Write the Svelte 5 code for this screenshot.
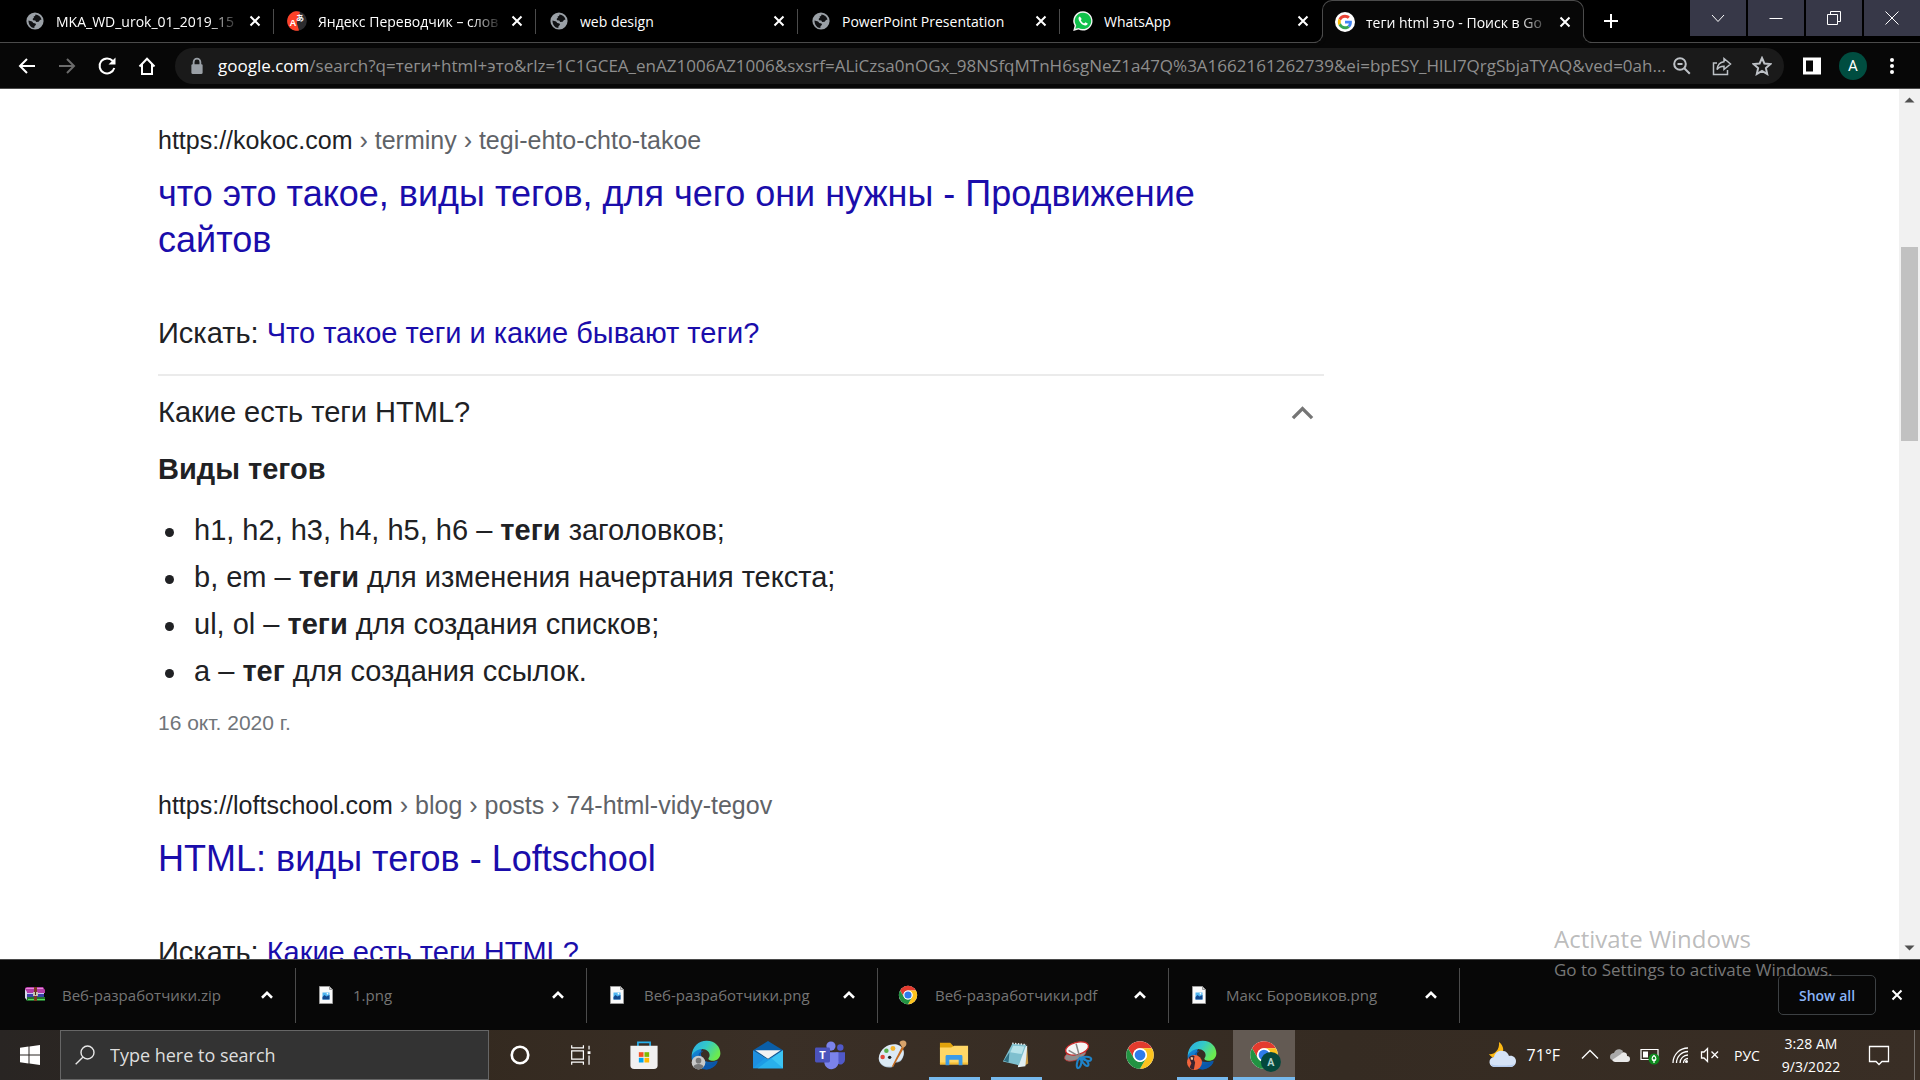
<script>
  const tabs = [
    { title: 'MKA_WD_urok_01_2019_15', icon: 'globe', long: true },
    { title: 'Яндекс Переводчик – слов', icon: 'yandex', long: true },
    { title: 'web design', icon: 'globe' },
    { title: 'PowerPoint Presentation', icon: 'globe' },
    { title: 'WhatsApp', icon: 'whatsapp' },
    { title: 'теги html это - Поиск в Go', icon: 'google', active: true, long: true }
  ];

  const urlRest =
    '/search?q=теги+html+это&rlz=1C1GCEA_enAZ1006AZ1006&sxsrf=ALiCzsa0nOGx_98NSfqMTnH6sgNeZ1a47Q%3A1662161262739&ei=bpESY_HlLI7QrgSbjaTYAQ&ved=0ah...';

  const downloads = [
    { name: 'Веб-разработчики.zip', icon: 'rar' },
    { name: '1.png', icon: 'image' },
    { name: 'Веб-разработчики.png', icon: 'image' },
    { name: 'Веб-разработчики.pdf', icon: 'chrome' },
    { name: 'Макс Боровиков.png', icon: 'image' }
  ];

  const tagKinds = [
    ['h1, h2, h3, h4, h5, h6 – ', 'теги', ' заголовков;'],
    ['b, em – ', 'теги', ' для изменения начертания текста;'],
    ['ul, ol – ', 'теги', ' для создания списков;'],
    ['a – ', 'тег', ' для создания ссылок.']
  ];

  const apps = [
    { name: 'Cortana', icon: 'cortana' },
    { name: 'Task View', icon: 'taskview' },
    { name: 'Microsoft Store', icon: 'store' },
    { name: 'Microsoft Edge', icon: 'edgeUser' },
    { name: 'Mail', icon: 'mail' },
    { name: 'Teams', icon: 'teams' },
    { name: 'Paint', icon: 'paint' },
    { name: 'File Explorer', icon: 'explorer', open: true },
    { name: 'Notepad', icon: 'notepad', open: true },
    { name: 'Snipping Tool', icon: 'snip' },
    { name: 'Google Chrome', icon: 'chrome' },
    { name: 'Microsoft Edge profile', icon: 'edgeProfile', open: true },
    { name: 'Google Chrome profile', icon: 'chromeProfile', open: true, active: true }
  ];

  let expanded = $state(true);
</script>

{#snippet chromeShape()}
  <circle cx="24" cy="24" r="22" fill="#fff" />
  <path fill="#e33b2e" d="M4.95 13A22 22 0 0 1 43.05 13H24A11 11 0 0 0 14.47 29.5Z" />
  <path fill="#fcc31e" d="M43.05 13A22 22 0 0 1 24 46L33.53 29.5A11 11 0 0 0 24 13Z" />
  <path fill="#229342" d="M24 46A22 22 0 0 1 4.95 13L14.47 29.5A11 11 0 0 0 33.53 29.5Z" />
  <circle cx="24" cy="24" r="11" fill="#fff" />
  <circle cx="24" cy="24" r="8.6" fill="#2f7bea" />
{/snippet}

{#snippet edgeShape(id)}
  <defs>
    <linearGradient id="{id}a" x1="0" y1="0" x2="1" y2="0.5">
      <stop offset="0" stop-color="#2ba7ea" />
      <stop offset="0.5" stop-color="#33c9c9" />
      <stop offset="1" stop-color="#6bea4f" />
    </linearGradient>
    <linearGradient id="{id}b" x1="0" y1="0" x2="0.7" y2="1">
      <stop offset="0" stop-color="#1590e0" />
      <stop offset="1" stop-color="#0b4f9e" />
    </linearGradient>
  </defs>
  <path fill="url(#{id}b)" d="M1 26C2 15 12 11 20 12C15 16 15 22 17 27C21 36 32 37 41 33C43 33 43 34 42 36C38 43 31 47 24 47C10 47 0 37 1 26Z" />
  <path fill="#0a58ad" d="M20 17C14 20 13 30 18 36C24 43 35 42 42 36C38 44 30 47 25 47C14 45 9 36 11 27C12 21 16 17 20 17Z" />
  <path fill="url(#{id}a)" d="M1 25C2 10 12 1 25 1C39 1 47 11 47 21C47 29 41 33 35 33C30 33 27 31 28 29C31 26 30 21 27 18C20 11 7 14 1 25Z" />
{/snippet}

{#snippet icon(name)}
  {#if name === 'globe'}
    <svg class="fav" viewBox="0 0 20 20" aria-hidden="true">
      <circle cx="10" cy="10" r="8.6" fill="#9aa0a6" />
      <path fill="#101113" d="M10.500 3.600c2.800.2 5.300 2.100 6 4.800l-1.500.5-1.400 1.900-2.400.2-.9-1.500-2.200-.3-.5-1.300 1.400-1.300-.4-1.100 1.500-.4zM3.500 9.500l3.600 1 1.200 1.500 2.200.4.500 1.300-1.500 1.600-.2 1.800C6 16.800 3.400 13.800 3.500 9.500z" />
    </svg>
  {:else if name === 'yandex'}
    <svg class="fav" viewBox="0 0 20 20" aria-hidden="true">
      <circle cx="10" cy="10" r="9.8" fill="#2b2b2e" />
      <path fill="#fc4128" d="M13 .7A9.800 9.800 0 1 0 12 19.600L9.800 12Z" />
      <text x="2.500" y="14.500" font-size="9.500" font-weight="700" fill="#fff" font-family="Liberation Sans, sans-serif">A</text>
      <text x="9" y="10" font-size="8" font-weight="700" fill="#fff" font-family="Noto Sans CJK JP, sans-serif">あ</text>
    </svg>
  {:else if name === 'whatsapp'}
    <svg class="fav" viewBox="0 0 20 20" aria-hidden="true">
      <path fill="#f4f4f4" d="M10 .2A9.700 9.700 0 0 0 1.600 14.800L.2 19.900l5.300-1.300A9.700 9.700 0 1 0 10 .2z" />
      <path fill="#10c14b" d="M10 1.700A8.200 8.200 0 0 0 3.200 14.500l-.9 3.300 3.400-.9A8.200 8.200 0 1 0 10 1.700z" />
      <path fill="#fff" d="M6.900 5.400c-.8.1-1.500 1.200-1.300 2.500.5 3 3.600 6.200 6.700 6.600 1.400.1 2.400-.8 2.400-1.900l-2.300-1.300-1.300 1.200c-1.400-.5-2.700-1.800-3.300-3.200l.9-1.200z" />
    </svg>
  {:else if name === 'google'}
    <svg class="fav" viewBox="0 0 20 20" aria-hidden="true">
      <circle cx="10" cy="10" r="10" fill="#fff" />
      <g transform="translate(2.800 2.800) scale(.3)">
        <path fill="#ea4335" d="M24 9.500c3.540 0 6.710 1.220 9.210 3.600l6.850-6.850C35.900 2.380 30.470 0 24 0 14.620 0 6.510 5.380 2.560 13.220l7.980 6.190C12.430 13.720 17.740 9.500 24 9.500z" />
        <path fill="#4285f4" d="M46.980 24.550c0-1.570-.15-3.090-.38-4.550H24v9.020h12.940c-.58 2.960-2.260 5.480-4.780 7.180l7.730 6c4.510-4.180 7.090-10.360 7.090-17.650z" />
        <path fill="#fbbc05" d="M10.530 28.590c-.48-1.450-.76-2.990-.76-4.590s.27-3.140.76-4.590l-7.980-6.190C.92 16.460 0 20.120 0 24c0 3.880.92 7.540 2.560 10.780l7.970-6.190z" />
        <path fill="#34a853" d="M24 48c6.480 0 11.930-2.130 15.890-5.810l-7.730-6c-2.150 1.450-4.920 2.300-8.160 2.300-6.260 0-11.570-4.220-13.470-9.910l-7.980 6.190C6.510 42.620 14.620 48 24 48z" />
      </g>
    </svg>
  {:else if name === 'rar'}
    <svg class="file" viewBox="0 0 20 20" aria-hidden="true">
      <path fill="#b23ba6" d="M0 3l2-1h16l2 3v3H2L0 6z" />
      <path fill="#e58ad9" d="M1 3h17v1H1z" />
      <path fill="#3b3fa8" d="M1 8h18v4H2l-1-1z" />
      <path fill="#c9c9f2" d="M2 8h17v1H2z" />
      <path fill="#24702f" d="M1 12h19v4H2l-1-1z" />
      <path fill="#55e055" d="M3 14h17v1H3z" />
      <path fill="#d8d8e8" d="M0 4l2 3v8l-2-2z" />
      <path fill="#7a3a20" d="M9 2h3v14H9z" />
      <path fill="#c9c2b4" d="M8 7h5v4H8z" />
      <path fill="#4a2a1c" d="M10 7h1v3h-1z" />
    </svg>
  {:else if name === 'image'}
    <svg class="file" viewBox="0 0 20 20" aria-hidden="true">
      <path fill="#fafafa" stroke="#9a9a9a" stroke-width="1" d="M3.500 1.500h10l3 3v14h-13z" />
      <path fill="#d5d5d5" stroke="#8a8a8a" stroke-width=".8" d="M13.500 1.500v3h3z" />
      <path fill="#4fb4f0" d="M6.500 7.500h7v7h-7z" />
      <path fill="#12488f" d="M6.500 12l2-2 2 1.500 3-1.500v4.500h-7z" />
      <circle cx="11.500" cy="8.700" r=".9" fill="#fff" />
    </svg>
  {:else if name === 'chrome'}
    <svg class="app" viewBox="0 0 48 48" aria-hidden="true">{@render chromeShape()}</svg>
  {:else if name === 'chromeProfile'}
    <svg class="app spill" viewBox="0 0 48 48" aria-hidden="true">
      {@render chromeShape()}
      <circle cx="35" cy="35" r="16" fill="#04483d" />
      <text x="35" y="41" text-anchor="middle" font-size="17" font-weight="700" fill="#b5d3cb" font-family="Roboto, sans-serif">A</text>
    </svg>
  {:else if name === 'edgeUser'}
    <svg class="app" viewBox="0 0 48 48" aria-hidden="true">
      {@render edgeShape('eu')}
      <circle cx="12" cy="36" r="11" fill="#c9c9c9" />
      <circle cx="12" cy="33" r="4.500" fill="#777" />
      <path fill="#777" d="M4 43c1-6 15-6 16 0-4 5-12 5-16 0z" />
    </svg>
  {:else if name === 'edgeProfile'}
    <svg class="app" viewBox="0 0 48 48" aria-hidden="true">
      {@render edgeShape('ep')}
      <circle cx="12" cy="36" r="12" fill="#f2643c" />
      <path fill="#3a2430" d="M3 28c3-3 7-4 9-2l-1 5 2 5-2 11c-3 0-5-1-7-3l3-7z" />
      <path fill="#f7c59a" d="M6 27l4 1-1 4-3-1z" />
    </svg>
  {:else if name === 'cortana'}
    <svg class="app" viewBox="0 0 32 32" aria-hidden="true">
      <circle cx="16" cy="16" r="8.800" fill="none" stroke="#fff" stroke-width="2.800" />
    </svg>
  {:else if name === 'taskview'}
    <svg class="app" viewBox="0 0 32 32" aria-hidden="true" fill="none" stroke="#fff" stroke-width="1.300">
      <path d="M5 11.500h12.500v9H5zM5 5.500v3h12.500v-3M5 26.500v-3h12.500v3M23.500 6v4M23.500 16.500v10" />
      <path d="M22 12h3v3h-3z" fill="#fff" stroke="none" />
    </svg>
  {:else if name === 'store'}
    <svg class="app" viewBox="0 0 32 32" aria-hidden="true">
      <path fill="none" stroke="#27b1ee" stroke-width="1.800" d="M9.500 7V2.500h13V7" />
      <path fill="#f1f1f1" d="M1.500 6h29v21a4 4 0 0 1-4 4h-21a4 4 0 0 1-4-4z" />
      <path fill="#f25022" d="M10.500 13h5v5h-5z" />
      <path fill="#7fba00" d="M16.500 13h5v5h-5z" />
      <path fill="#00a4ef" d="M10.500 19h5v5h-5z" />
      <path fill="#ffb900" d="M16.500 19h5v5h-5z" />
    </svg>
  {:else if name === 'mail'}
    <svg class="app" viewBox="0 0 32 32" aria-hidden="true">
      <path fill="#0a5ea8" d="M0 11L16 1l16 10-16 9z" />
      <path fill="#1d8fe0" d="M0 11l16 9.500L32 11v19H0z" />
      <path fill="#3cc4f3" d="M32 11v19H5z" />
      <path fill="#1da4e8" d="M0 30l13-11 3 1.500 3-1.500 13 11z" opacity=".6" />
      <path fill="#f3f3f3" d="M2.500 11h27L16 20z" />
    </svg>
  {:else if name === 'teams'}
    <svg class="app" viewBox="0 0 32 32" aria-hidden="true">
      <circle cx="17" cy="6.500" r="4.900" fill="#7b83eb" />
      <circle cx="27" cy="8" r="3.400" fill="#5059c9" />
      <path fill="#5059c9" d="M22 13h10v8a5 5 0 0 1-8 4z" />
      <path fill="#7b83eb" d="M10 13h15v9a7.500 7.500 0 0 1-15 3z" />
      <rect x="0" y="8" width="16" height="16" rx="1.500" fill="#4b53bc" />
      <text x="8" y="20.500" text-anchor="middle" font-size="12" font-weight="700" fill="#fff" font-family="Open Sans, sans-serif">T</text>
    </svg>
  {:else if name === 'paint'}
    <svg class="app" viewBox="0 0 32 32" aria-hidden="true">
      <path fill="#a9bfd1" d="M2 19C4 9 14 4 22 6c7 2 8 9 5 14-2 4-5 4-7 4-3 1-1 4-4 5C8 31 1 25 2 19z" />
      <path fill="#dceaf5" d="M2 18C4 8 14 3 22 5c7 2 8 9 5 14-2 4-5 4-7 4-3 1-1 4-4 5C8 30 1 24 2 18z" />
      <circle cx="6" cy="18" r="2.400" fill="#e0483c" />
      <circle cx="10" cy="11.500" r="2.400" fill="#59b04a" />
      <circle cx="17" cy="9" r="2.600" fill="#f4b42c" />
      <circle cx="13.500" cy="18.500" r="1.800" fill="#222" />
      <path fill="#c46a1e" d="M27 6l2 2-12 21-1-1z" />
      <path fill="#d7a36b" d="M24 3c1-3 5-3 7-1 1 2 0 6-4 6z" />
    </svg>
  {:else if name === 'explorer'}
    <svg class="app" viewBox="0 0 32 32" aria-hidden="true">
      <path fill="#e0a30c" d="M1 3h11l3 3v4H1z" />
      <path fill="#ffd766" d="M1 8h12l3-2h15v20H1z" />
      <path fill="#f5bd35" d="M1 24h30v2H1z" />
      <path fill="#3a9be8" d="M7 27V17.500a1.500 1.500 0 0 1 1.500-1.500h15a1.500 1.500 0 0 1 1.500 1.500V27h-4v-6h-10v6z" />
    </svg>
  {:else if name === 'notepad'}
    <svg class="app" viewBox="0 0 32 32" aria-hidden="true">
      <path fill="#c99a45" d="M25 6l3 2 1 17-5 3z" />
      <path fill="#dfeef2" d="M21 8l7-2-2 22-8 1z" />
      <path fill="#7fc0cf" d="M12 4l15 1-8 22L2 23z" />
      <path fill="#2f6f82" d="M3 22l6-9-1 11z" />
      <path fill="#b7e3ea" d="M13 6l12 1-3 8-12-2z" />
      <path fill="none" stroke="#e9f3f5" stroke-width="1.600" stroke-dasharray="1.500 1.500" d="M12 3.500l15 1.500" />
    </svg>
  {:else if name === 'snip'}
    <svg class="app" viewBox="0 0 32 32" aria-hidden="true">
      <ellipse cx="13" cy="16" rx="12" ry="5.500" transform="rotate(-20 13 16)" fill="#8d8d8d" stroke="#c33" stroke-width=".7" />
      <ellipse cx="15" cy="9" rx="12.500" ry="6.500" transform="rotate(-15 15 9)" fill="#f5f5f5" stroke="#cf2a2a" stroke-width="1.300" />
      <path fill="none" stroke="#888" stroke-width="1.600" d="M6 11l14 8M14 4l4 15" />
      <path fill="none" stroke="#1f83c9" stroke-width="2.200" d="M18 19c-4 3-4 11-2 11s5-5 3-10c3 7 7 9 8 7s-3-8-8-8c6-2 12-1 11 2s-6 1-11-2z" />
    </svg>
  {/if}
{/snippet}

{#snippet cross()}
  <svg class="cross" viewBox="0 0 16 16" aria-hidden="true"><path d="M3.500 3.500l9 9M12.500 3.500l-9 9" /></svg>
{/snippet}

<div class="screen">
  <header class="tabstrip">
    <div class="tabs" role="tablist">
      {#each tabs as tab}
        <div class="tab" class:active={tab.active} role="tab" aria-selected={!!tab.active} tabindex="0">
          {@render icon(tab.icon)}
          <span class="tab-title" class:faded={tab.long}>{tab.title}</span>
          <button class="tab-close" aria-label="Close tab">{@render cross()}</button>
        </div>
      {/each}
    </div>
    <button class="new-tab" aria-label="New tab">
      <svg viewBox="0 0 16 16" aria-hidden="true"><path d="M8 1v14M1 8h14" /></svg>
    </button>
    <div class="window-controls">
      <button aria-label="Search tabs"><svg viewBox="0 0 16 16" aria-hidden="true"><path d="M2 5l6 6.500L14 5" /></svg></button>
      <button aria-label="Minimize"><svg viewBox="0 0 16 16" aria-hidden="true"><path d="M1.500 8.500h13" /></svg></button>
      <button aria-label="Restore"><svg viewBox="0 0 16 16" aria-hidden="true"><path d="M1.500 4.500h10v10h-10zM4.500 4.500v-3h10v10h-3" /></svg></button>
      <button aria-label="Close window"><svg viewBox="0 0 16 16" aria-hidden="true"><path d="M1.500 1.500l13 13M14.500 1.500l-13 13" /></svg></button>
    </div>
  </header>

  <nav class="toolbar" aria-label="Browser toolbar">
    <button class="tool" aria-label="Back">
      <svg viewBox="0 0 20 20" aria-hidden="true" class="stroke"><path d="M18 10H3M10 3l-7 7 7 7" /></svg>
    </button>
    <button class="tool dim" aria-label="Forward">
      <svg viewBox="0 0 20 20" aria-hidden="true" class="stroke"><path d="M2 10h15M10 3l7 7-7 7" /></svg>
    </button>
    <button class="tool" aria-label="Reload">
      <svg viewBox="0 0 20 20" aria-hidden="true" class="stroke"><path d="M15.800 5A7.500 7.500 0 1 0 17.300 12" /><path d="M18.500 1.500v7H11.500z" fill="currentColor" stroke="none" /></svg>
    </button>
    <button class="tool" aria-label="Home">
      <svg viewBox="0 0 20 20" aria-hidden="true" class="stroke"><path d="M2.500 10.500L10 2.800l7.500 7.700M5 8.500V18h10V8.500" /></svg>
    </button>
    <div class="omnibox">
      <svg class="lock" viewBox="0 0 16 16" aria-hidden="true"><rect x="3" y="6.500" width="10" height="8.500" rx="1" fill="#9aa0a6" /><path d="M5 7V4.500a3 3 0 0 1 6 0V7" fill="none" stroke="#9aa0a6" stroke-width="1.600" /></svg>
      <label class="host" for="address">google.com</label>
      <input id="address" class="address" type="text" value={urlRest} spellcheck="false" />
      <div class="page-tools">
        <button aria-label="Zoom">
          <svg viewBox="0 0 20 20" aria-hidden="true" class="stroke"><circle cx="8" cy="8" r="5.800" /><path d="M12.300 12.300l5.500 5.500M5.500 8h5" /></svg>
        </button>
        <button aria-label="Share">
          <svg viewBox="0 0 20 20" aria-hidden="true" class="stroke thin"><path d="M5 7H1.500v11.500h14V14" /><path d="M12 2.500l6.500 5.500L12 13.500v-3.300c-3.500 0-5.500 1-7 3.300.5-4.300 2.800-7.300 7-7.800z" /></svg>
        </button>
        <button aria-label="Bookmark this page">
          <svg viewBox="0 0 20 20" aria-hidden="true" class="stroke"><path d="M10 2l2.400 5.500 6 .6-4.500 4 1.300 5.900L10 14.900 4.800 18l1.300-5.900-4.500-4 6-.6z" /></svg>
        </button>
      </div>
    </div>
    <button class="tool" aria-label="Side panel">
      <svg viewBox="0 0 20 20" aria-hidden="true"><path fill="#fff" fill-rule="evenodd" d="M1 1.500h18v17H1zM4 4.500v11h7v-11z" /></svg>
    </button>
    <button class="avatar" aria-label="Profile">A</button>
    <button class="tool" aria-label="Menu">
      <svg viewBox="0 0 20 20" aria-hidden="true" fill="#fff"><circle cx="10" cy="4" r="2" /><circle cx="10" cy="10" r="2" /><circle cx="10" cy="16" r="2" /></svg>
    </button>
  </nav>

  <div class="viewport">
    <main class="results">
      <article>
        <div class="cite">https://kokoc.com{' '}<span>› terminy › tegi-ehto-chto-takoe</span></div>
        <h3><a href="#kokoc">что это такое, виды тегов, для чего они нужны - Продвижение сайтов</a></h3>
        <p class="more">Искать: <a href="#more">Что такое теги и какие бывают теги?</a></p>
      </article>

      <section class="question">
        <button class="ask" aria-expanded={expanded} onclick={() => (expanded = !expanded)}>
          <span>Какие есть теги HTML?</span>
          <svg viewBox="0 0 24 24" aria-hidden="true"><path d="M3.500 17l8.500-8.500 8.500 8.500" /></svg>
        </button>
        {#if expanded}
          <h4>Виды тегов</h4>
          <ul>
            {#each tagKinds as [before, bold, after]}
              <li>{before}<b>{bold}</b>{after}</li>
            {/each}
          </ul>
          <p class="date">16 окт. 2020 г.</p>
        {/if}
      </section>

      <article>
        <div class="cite">https://loftschool.com{' '}<span>› blog › posts › 74-html-vidy-tegov</span></div>
        <h3><a href="#loftschool">HTML: виды тегов - Loftschool</a></h3>
        <p class="more">Искать: <a href="#more-tags">Какие есть теги HTML?</a></p>
      </article>
    </main>

    <div class="scrollbar">
      <svg viewBox="0 0 21 21" aria-hidden="true"><path d="M5.500 13.500l5-5 5 5z" /></svg>
      <div class="track"><div class="thumb"></div></div>
      <svg viewBox="0 0 21 21" aria-hidden="true"><path d="M5.500 7.500l5 5 5-5z" /></svg>
    </div>
  </div>

  <section class="downloads" aria-label="Downloads">
    {#each downloads as file}
      <div class="download">
        {@render icon(file.icon)}
        <span class="file-name">{file.name}</span>
        <button class="up" aria-label="Options for {file.name}">
          <svg viewBox="0 0 16 16" aria-hidden="true"><path d="M4 10.200l4-4 4 4" /></svg>
        </button>
      </div>
    {/each}
    <button class="show-all">Show all</button>
    <button class="close-bar" aria-label="Close downloads bar">{@render cross()}</button>
  </section>

  <footer class="taskbar">
    <button class="start" aria-label="Start">
      <svg viewBox="0 0 20 20" aria-hidden="true" fill="#fff"><path d="M0 2.800l8.500-1.200v7.900H0zM9.500 1.400L20 0v9.500H9.500zM0 10.500h8.500v7.900L0 17.200zM9.500 10.500H20V20L9.500 18.600z" /></svg>
    </button>
    <label class="search">
      <svg viewBox="0 0 20 20" aria-hidden="true"><circle cx="12.500" cy="7.500" r="6.500" /><path d="M7.800 12.200L.7 19.300" /></svg>
      <input type="text" placeholder="Type here to search" aria-label="Type here to search" />
    </label>
    <div class="apps">
      {#each apps as app}
        <button class="app-button" class:open={app.open} class:current={app.active} aria-label={app.name}>
          {@render icon(app.icon)}
        </button>
      {/each}
    </div>
    <div class="tray">
      <button class="weather">
        <svg viewBox="0 0 28 28" aria-hidden="true">
          <path fill="#fdb913" d="M11 1c5 4 6 10 1 14-4 3-9 2-11-2 4 1 11-3 10-12z" />
          <path fill="#d5e3f7" d="M7 26a5 5 0 0 1-1-10c1-5 5-7 9-6 3 0 5 2 6 5 4-1 7 2 7 5 0 4-3 6-6 6z" />
          <path fill="#b4cbee" d="M3 23c3 2 20 2 24 0-1 2-3 3-5 3H7c-2 0-3-1-4-3z" />
        </svg>
        71°F
      </button>
      <button class="tray-button" aria-label="Show hidden icons">
        <svg viewBox="0 0 20 20" aria-hidden="true" class="line"><path d="M2 13.500l8-8 8 8" /></svg>
      </button>
      <button class="tray-button" aria-label="OneDrive">
        <svg viewBox="0 0 20 20" aria-hidden="true"><path fill="#a9a9a9" d="M0 12c0-3 2-4 4-4 1-4 6-5 9-2l-4 9H3c-2 0-3-1-3-3z" /><path fill="#e9e9e9" d="M2 15l9-6c1-2 3-2 5-1 1 1 1 2 1 3 2 0 3 1 3 3s-1 3-3 3H5c-1 0-2-1-3-2z" /></svg>
      </button>
      <button class="tray-button" aria-label="Battery">
        <svg viewBox="0 0 20 20" aria-hidden="true"><path fill="none" stroke="#fff" stroke-width="1.200" d="M1 4.500h17v10H1z" /><path fill="#fff" d="M3 6.500h5v6H3z" /><circle cx="14" cy="14" r="5.500" fill="#0d8a1d" /><path fill="none" stroke="#fff" stroke-width="1.200" d="M14 10.500c2.500 2 2.500 4.500 0 5.500-2.500-1-2.500-3.500 0-5.500zM14 14v4" /></svg>
      </button>
      <button class="tray-button" aria-label="Network">
        <svg viewBox="0 0 20 20" aria-hidden="true" class="line"><path d="M3 18A15 15 0 0 1 18 3M6.500 18A11.500 11.500 0 0 1 18 6.500M10 18a8 8 0 0 1 8-8M13.500 18A4.500 4.500 0 0 1 18 13.500" /><circle cx="16.500" cy="16.500" r="1.500" fill="#fff" stroke="none" /></svg>
      </button>
      <button class="tray-button" aria-label="Volume muted">
        <svg viewBox="0 0 20 20" aria-hidden="true" class="line"><path d="M1.500 7H4l3.500-3.500v13L4 13H1.500zM11.500 6.500l6.500 6.500M18 6.500l-6.500 6.500" /></svg>
      </button>
      <button class="language">РУС</button>
      <button class="clock"><span>3:28 AM</span><span>9/3/2022</span></button>
      <button class="notice" aria-label="Notifications">
        <svg viewBox="0 0 22 22" aria-hidden="true" class="line"><path d="M1.500 2.500h19v15h-6.500l-3 3-3-3H1.500z" /></svg>
      </button>
      <span class="desktop-edge"></span>
    </div>
  </footer>

  <div class="watermark">
    <div class="mark-title">Activate Windows</div>
    <div class="mark-text">Go to Settings to activate Windows.</div>
  </div>
</div>

<style>
  :global(body) {
    margin: 0;
    background: #fff;
  }

  .screen {
    position: relative;
    display: flex;
    flex-direction: column;
    height: 100vh;
    overflow: hidden;
    font-family: 'Open Sans', 'Noto Sans', sans-serif;
    color: #fff;
  }

  button,
  input {
    font: inherit;
    color: inherit;
    background: none;
    border: 0;
    padding: 0;
    margin: 0;
    outline: none;
  }

  button {
    display: flex;
    align-items: center;
    justify-content: center;
    flex: none;
  }

  svg {
    display: block;
    flex: none;
  }

  .fav,
  .file {
    width: 20px;
    height: 20px;
  }

  .cross {
    width: 16px;
    height: 16px;
    fill: none;
    stroke: #fff;
    stroke-width: 2;
  }

  /* Tab strip */
  .tabstrip {
    display: flex;
    flex: none;
    height: 42px;
    padding-left: 12px;
    background: #000;
    border-bottom: 1px solid #4b4b4b;
  }

  .tabs {
    display: flex;
    flex: 0 1 1572px;
    min-width: 0;
  }

  .tab {
    position: relative;
    display: flex;
    align-items: center;
    flex: 1 1 0;
    min-width: 0;
    box-sizing: border-box;
    padding: 0 11px 0 13px;
    font-size: 14px;
  }

  .tab:not(.active)::after {
    content: '';
    position: absolute;
    right: 0;
    top: 9px;
    width: 1px;
    height: 25px;
    background: #4b4b4b;
  }

  .tab:nth-last-child(2)::after {
    display: none;
  }

  .tab.active {
    margin-bottom: -1px;
    padding: 0 10px 0 12px;
    background: #070707;
    border: 1px solid #4b4b4b;
    border-bottom: 0;
    border-radius: 10px 10px 0 0;
  }

  .tab.active::before,
  .tab.active::after {
    content: '';
    position: absolute;
    bottom: 0;
    width: 9px;
    height: 9px;
    border-bottom: 1px solid #4b4b4b;
  }

  .tab.active::before {
    right: 100%;
    border-right: 1px solid #4b4b4b;
    border-bottom-right-radius: 9px;
    box-shadow: 3px 3px 0 #070707;
  }

  .tab.active::after {
    left: 100%;
    border-left: 1px solid #4b4b4b;
    border-bottom-left-radius: 9px;
    box-shadow: -3px 3px 0 #070707;
  }

  .tab-title {
    flex: 1;
    min-width: 0;
    margin: 0 4px 0 11px;
    overflow: hidden;
    white-space: nowrap;
  }

  .faded {
    mask-image: linear-gradient(to right, #000 calc(100% - 34px), transparent calc(100% - 2px));
  }

  .new-tab {
    width: 54px;
  }

  .new-tab svg {
    width: 16px;
    height: 16px;
    stroke: #fff;
    stroke-width: 2;
  }

  .window-controls {
    display: flex;
    gap: 2px;
    height: 36px;
    margin-left: auto;
  }

  .window-controls button {
    width: 56px;
    height: 36px;
    background: #373848;
  }

  .window-controls svg {
    width: 16px;
    height: 16px;
    fill: none;
    stroke: #fff;
    stroke-width: 1;
  }

  /* Toolbar */
  .toolbar {
    display: flex;
    align-items: center;
    flex: none;
    box-sizing: border-box;
    height: 46px;
    padding: 0 8px 0 7px;
    background: #070707;
    border-bottom: 1px solid #4b4b4b;
  }

  .tool {
    width: 40px;
    height: 36px;
  }

  .tool svg,
  .page-tools svg {
    width: 20px;
    height: 20px;
  }

  .dim {
    color: #6b6b6b;
  }

  .stroke {
    fill: none;
    stroke: currentColor;
    stroke-width: 2;
  }

  .thin {
    stroke-width: 1.5;
  }

  .omnibox {
    display: flex;
    align-items: center;
    flex: 1;
    min-width: 0;
    height: 36px;
    margin: 0 8px;
    padding: 0 12px 0 13px;
    background: #1a1a1a;
    border-radius: 18px;
    font-size: 17px;
  }

  .lock {
    width: 18px;
    height: 18px;
    margin-right: 12px;
  }

  .address {
    flex: 1;
    min-width: 0;
    height: 34px;
    color: #8e8e8e;
    text-overflow: ellipsis;
  }

  .page-tools {
    display: flex;
    gap: 20px;
    color: #bdc1c6;
  }

  .avatar {
    width: 28px;
    height: 28px;
    margin: 0 5px 0 7px;
    background: #004d40;
    border-radius: 50%;
    font-family: Roboto, sans-serif;
    font-size: 15px;
  }

  /* Page */
  .viewport {
    display: flex;
    flex: 1;
    min-height: 0;
    overflow: hidden;
    background: #fff;
  }

  .results {
    flex: 1;
    min-width: 0;
    padding: 34px 24px 0 158px;
    font-family: 'Liberation Sans', Arial, sans-serif;
    font-size: 29px;
    color: #202124;
  }

  article,
  .question {
    max-width: 1166px;
  }

  .cite {
    font-size: 25px;
    line-height: 34px;
  }

  .cite span {
    color: #5f6368;
  }

  h3 {
    max-width: 1060px;
    margin: 14px 0 0;
    font-size: 36px;
    font-weight: 400;
    line-height: 46px;
  }

  a {
    color: #1a0dab;
    text-decoration: none;
  }

  .more {
    margin: 50px 0 0;
    line-height: 40px;
  }

  .question {
    margin-top: 21px;
    border-top: 2px solid #ebebeb;
  }

  .ask {
    justify-content: space-between;
    width: 100%;
    padding: 14px 8px 0 0;
    line-height: 44px;
  }

  .ask svg {
    width: 27px;
    height: 27px;
    fill: none;
    stroke: #757575;
    stroke-width: 3;
  }

  h4 {
    margin: 15px 0 0;
    font-size: 29px;
    line-height: 40px;
  }

  ul {
    display: flex;
    flex-direction: column;
    gap: 7px;
    margin: 21px 0 0;
    padding: 0 0 0 36px;
    list-style: none;
  }

  li {
    line-height: 40px;
  }

  li::before {
    content: '';
    display: inline-block;
    width: 9px;
    height: 9px;
    margin: 0 20px 0 -29px;
    border-radius: 50%;
    background: #202124;
    vertical-align: middle;
  }

  .date {
    margin: 16px 0 0;
    font-size: 21px;
    line-height: 32px;
    color: #70757a;
  }

  .question + article {
    margin-top: 49px;
  }

  .scrollbar {
    display: flex;
    flex-direction: column;
    flex: none;
    width: 21px;
    background: #f1f1f1;
  }

  .scrollbar svg {
    width: 21px;
    height: 21px;
    fill: #505050;
  }

  .track {
    flex: 1;
    padding: 0 2px;
  }

  .track::before {
    content: '';
    display: block;
    height: 16.5%;
  }

  .thumb {
    height: 23.5%;
    background: #c1c1c1;
  }

  /* Downloads */
  .downloads {
    display: flex;
    align-items: center;
    flex: none;
    box-sizing: border-box;
    height: 71px;
    padding-right: 15px;
    background: #070707;
    border-top: 1px solid #4b4b4b;
    font-size: 15px;
  }

  .download {
    display: flex;
    align-items: center;
    flex: 0 1 291px;
    box-sizing: border-box;
    min-width: 0;
    height: 55px;
    padding: 0 18px 0 20px;
    border-right: 1px solid #4b4b4b;
  }

  .download:first-child {
    flex-basis: 296px;
    padding-left: 25px;
  }

  .download :global(.app) {
    width: 20px;
    height: 20px;
  }

  .file-name {
    flex: 1;
    min-width: 0;
    margin-left: 17px;
    overflow: hidden;
    white-space: nowrap;
    color: #757575;
  }

  .up svg {
    width: 20px;
    height: 20px;
    fill: none;
    stroke: #fff;
    stroke-width: 2;
  }

  .show-all {
    width: 98px;
    height: 40px;
    margin-left: auto;
    border: 1px solid #3c4043;
    border-radius: 5px;
    font-size: 14px;
    font-weight: 600;
    color: #8ab4f8;
  }

  .close-bar {
    margin-left: 13px;
  }

  /* Taskbar */
  .taskbar {
    display: flex;
    flex: none;
    height: 50px;
    background: linear-gradient(to right, #292523, #33291f 22%, #3a2f26 40%, #352b22 70%, #392e25);
  }

  .start {
    width: 60px;
  }

  .start svg {
    width: 20px;
    height: 20px;
  }

  .search {
    display: flex;
    align-items: center;
    flex: 0 1 429px;
    box-sizing: border-box;
    gap: 15px;
    min-width: 0;
    padding-left: 14px;
    background: #333;
    border: 1px solid #666;
    font-size: 18px;
  }

  .search svg {
    width: 20px;
    height: 20px;
    fill: none;
    stroke: #e8e8e8;
    stroke-width: 1.4;
  }

  .search input {
    flex: 1;
    min-width: 0;
  }

  .search input::placeholder {
    color: #dedede;
    opacity: 1;
  }

  .apps {
    display: flex;
  }

  .app-button {
    position: relative;
    width: 62px;
  }

  .app {
    width: 30px;
    height: 30px;
  }

  .spill {
    overflow: visible;
  }

  .app-button.open::after {
    content: '';
    position: absolute;
    left: 6px;
    right: 5px;
    bottom: 0;
    height: 3px;
    background: #76b9ed;
  }

  .app-button.current {
    background: #635a53;
  }

  .app-button.current::after {
    left: 0;
    right: 0;
  }

  .tray {
    display: flex;
    margin-left: auto;
    font-size: 14px;
  }

  .line {
    fill: none;
    stroke: #fff;
    stroke-width: 1.3;
  }

  .weather {
    gap: 11px;
    margin-right: 15px;
    font-size: 16px;
  }

  .weather svg {
    width: 28px;
    height: 28px;
  }

  .tray-button {
    width: 30px;
  }

  .tray-button svg {
    width: 20px;
    height: 20px;
  }

  .language {
    width: 44px;
  }

  .clock {
    flex-direction: column;
    width: 84px;
    line-height: 23px;
  }

  .notice {
    width: 50px;
    margin-left: 1px;
  }

  .notice svg {
    width: 22px;
    height: 22px;
  }

  .desktop-edge {
    width: 5px;
    margin-left: 10px;
    border-left: 1px solid #75706b;
  }

  /* Activation notice floats over the page and the downloads bar */
  .watermark {
    position: absolute;
    right: 83px;
    bottom: 96px;
    width: 283px;
    white-space: nowrap;
    pointer-events: none;
    color: rgba(150, 150, 150, 0.65);
  }

  .mark-title {
    font-size: 24px;
    line-height: 34px;
  }

  .mark-text {
    font-size: 17px;
    line-height: 28px;
    color: #777;
  }
</style>
